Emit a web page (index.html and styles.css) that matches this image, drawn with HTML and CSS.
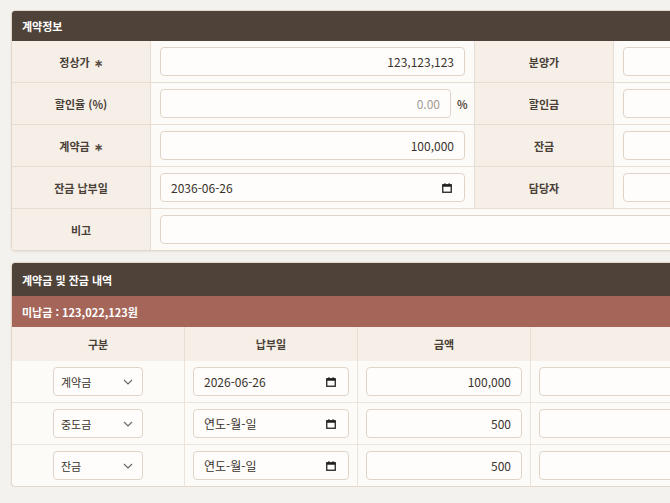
FILE: index.html
```html
<!DOCTYPE html>
<html lang="ko">
<head>
<meta charset="utf-8">
<title>계약정보</title>
<link rel="stylesheet" href="styles.css">
</head>
<body>
<div class="page">
  <section class="card">
    <div class="card-head">계약정보</div>
    <div class="info-grid">
      <div class="lbl">정상가 <span class="req">∗</span></div>
      <div class="val"><input class="inp num" type="text" value="123,123,123"></div>
      <div class="lbl">분양가</div>
      <div class="val"><input class="inp num" type="text" value=""></div>

      <div class="lbl">할인율 (%)</div>
      <div class="val"><input class="inp num" type="text" placeholder="0.00"><span class="unit">%</span></div>
      <div class="lbl">할인금</div>
      <div class="val"><input class="inp num" type="text" value=""></div>

      <div class="lbl">계약금 <span class="req">∗</span></div>
      <div class="val"><input class="inp num" type="text" value="100,000"></div>
      <div class="lbl">잔금</div>
      <div class="val"><input class="inp num" type="text" value=""></div>

      <div class="lbl">잔금 납부일</div>
      <div class="val">
        <div class="inp date"><span>2036-06-26</span>
          <svg class="cal" width="10" height="10" viewBox="0 0 10 10"><rect x="0.75" y="1.75" width="8.5" height="7.5" fill="none" stroke="#222" stroke-width="1.3"/><rect x="0.75" y="1.75" width="8.5" height="2" fill="#222"/><rect x="2.3" y="0.2" width="1.2" height="2" fill="#222"/><rect x="6.5" y="0.2" width="1.2" height="2" fill="#222"/></svg>
        </div>
      </div>
      <div class="lbl">담당자</div>
      <div class="val"><input class="inp" type="text" value=""></div>

      <div class="lbl last">비고</div>
      <div class="val wide last"><input class="inp" type="text" value=""></div>
    </div>
  </section>

  <section class="card">
    <div class="card-head tall">계약금 및 잔금 내역</div>
    <div class="due">미납금 : 123,022,123원</div>
    <div class="pay-table">
      <div class="th">구분</div>
      <div class="th">납부일</div>
      <div class="th">금액</div>
      <div class="th"></div>

      <div class="td center">
        <div class="inp sel"><span>계약금</span><svg width="10" height="6" viewBox="0 0 10 6"><path d="M1 1l4 4 4-4" fill="none" stroke="#666" stroke-width="1.1"/></svg></div>
      </div>
      <div class="td">
        <div class="inp date"><span>2026-06-26</span>
          <svg class="cal" width="10" height="10" viewBox="0 0 10 10"><rect x="0.75" y="1.75" width="8.5" height="7.5" fill="none" stroke="#222" stroke-width="1.3"/><rect x="0.75" y="1.75" width="8.5" height="2" fill="#222"/><rect x="2.3" y="0.2" width="1.2" height="2" fill="#222"/><rect x="6.5" y="0.2" width="1.2" height="2" fill="#222"/></svg>
        </div>
      </div>
      <div class="td"><input class="inp num" type="text" value="100,000"></div>
      <div class="td"><input class="inp" type="text" value=""></div>

      <div class="td center">
        <div class="inp sel"><span>중도금</span><svg width="10" height="6" viewBox="0 0 10 6"><path d="M1 1l4 4 4-4" fill="none" stroke="#666" stroke-width="1.1"/></svg></div>
      </div>
      <div class="td">
        <div class="inp date"><span>연도-월-일</span>
          <svg class="cal" width="10" height="10" viewBox="0 0 10 10"><rect x="0.75" y="1.75" width="8.5" height="7.5" fill="none" stroke="#222" stroke-width="1.3"/><rect x="0.75" y="1.75" width="8.5" height="2" fill="#222"/><rect x="2.3" y="0.2" width="1.2" height="2" fill="#222"/><rect x="6.5" y="0.2" width="1.2" height="2" fill="#222"/></svg>
        </div>
      </div>
      <div class="td"><input class="inp num" type="text" value="500"></div>
      <div class="td"><input class="inp" type="text" value=""></div>

      <div class="td center last">
        <div class="inp sel"><span>잔금</span><svg width="10" height="6" viewBox="0 0 10 6"><path d="M1 1l4 4 4-4" fill="none" stroke="#666" stroke-width="1.1"/></svg></div>
      </div>
      <div class="td last">
        <div class="inp date"><span>연도-월-일</span>
          <svg class="cal" width="10" height="10" viewBox="0 0 10 10"><rect x="0.75" y="1.75" width="8.5" height="7.5" fill="none" stroke="#222" stroke-width="1.3"/><rect x="0.75" y="1.75" width="8.5" height="2" fill="#222"/><rect x="2.3" y="0.2" width="1.2" height="2" fill="#222"/><rect x="6.5" y="0.2" width="1.2" height="2" fill="#222"/></svg>
        </div>
      </div>
      <div class="td last"><input class="inp num" type="text" value="500"></div>
      <div class="td last"><input class="inp" type="text" value=""></div>
    </div>
  </section>
</div>
</body>
</html>
```

FILE: styles.css
```css
html, body {
  margin: 0;
  padding: 0;
  background: #f4f2ee;
  overflow: hidden;
}
body {
  font-family: "Noto Sans CJK KR", "Noto Sans", sans-serif;
  color: #3b332d;
}
.page {
  width: 940px;
  padding: 10px 0 0 11px;
  display: flex;
  flex-direction: column;
  gap: 11px;
}
.card {
  background: #fdfbf8;
  border: 1px solid #e2d8cc;
  border-radius: 4px;
  overflow: hidden;
  box-shadow: 0 1px 2px rgba(60, 40, 20, 0.08);
}
.card-head {
  background: #4f4339;
  color: #fff;
  font-size: 11px;
  font-weight: 700;
  height: 30px;
  display: flex;
  align-items: center;
  padding-left: 10px;
}
.card-head.tall {
  height: 33px;
}
.info-grid {
  display: grid;
  grid-template-columns: 139px 324px 139px 1fr;
}
.lbl {
  background: #f5efe8;
  border-right: 1px solid #e8ddd1;
  border-bottom: 1px solid #e8ddd1;
  display: flex;
  align-items: center;
  justify-content: center;
  font-size: 11px;
  font-weight: 600;
  color: #4a3f37;
  height: 41px;
}
.req {
  margin-left: 4px;
  color: #5a4d43;
  font-weight: 700;
}
.val {
  border-right: 1px solid #e8ddd1;
  border-bottom: 1px solid #e8ddd1;
  display: flex;
  align-items: center;
  gap: 6px;
  padding: 0 9px;
  height: 41px;
}
.val.wide {
  grid-column: span 3;
}
.lbl.last, .val.last, .td.last {
  border-bottom: none;
}
.inp {
  box-sizing: border-box;
  height: 29px;
  width: 100%;
  min-width: 0;
  border: 1px solid #e0d4c7;
  border-radius: 4px;
  background: #fefdfb;
  font-family: "Noto Sans CJK KR", "Noto Sans", sans-serif;
  font-size: 12px;
  color: #3b332d;
  padding: 0 10px;
  outline: none;
}
.inp.num {
  text-align: right;
}
.inp::placeholder {
  color: #a29a93;
}
.unit {
  font-size: 11px;
  font-weight: 600;
  color: #5a4d43;
  width: 8px;
  flex: none;
}
.date {
  display: flex;
  align-items: center;
  justify-content: space-between;
  padding-right: 12px;
}
.sel {
  width: 90px;
  display: flex;
  align-items: center;
  justify-content: space-between;
  padding: 0 9px 0 7px;
  font-size: 11px;
}
.due {
  background: #a56659;
  color: #fff;
  font-size: 11px;
  font-weight: 700;
  height: 31px;
  display: flex;
  align-items: center;
  padding-left: 10px;
}
.pay-table {
  display: grid;
  grid-template-columns: 173px 173px 173px 1fr;
}
.th {
  background: #f5efe8;
  border-right: 1px solid #e8ddd1;
  height: 34px;
  display: flex;
  align-items: center;
  justify-content: center;
  font-size: 11px;
  font-weight: 600;
  color: #4a3f37;
}
.td {
  border-right: 1px solid #ece4da;
  border-bottom: 1px solid #ece4da;
  height: 41px;
  display: flex;
  align-items: center;
  padding: 0 8px;
}
.td.center {
  justify-content: center;
}
```
